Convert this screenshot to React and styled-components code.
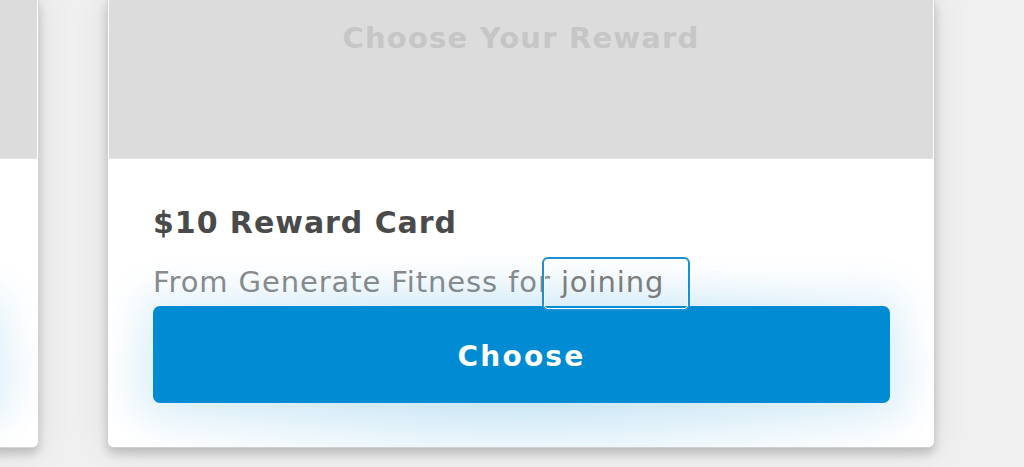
import React from 'react'
import styled, { createGlobalStyle } from 'styled-components'

const GlobalStyle = createGlobalStyle`
  html, body {
    margin: 0;
    padding: 0;
    background: #efefef;
    overflow: hidden;
  }
  body {
    font-family: 'DejaVu Sans', 'Open Sans', sans-serif;
  }
`

const Page = styled.div`
  width: 1024px;
  height: 467px;
  overflow: hidden;
  background: #f0f0f0;
`

const Row = styled.div`
  display: flex;
  align-items: flex-start;
  gap: 68px;
  margin-left: -789px;
  margin-top: -2px;
`

const Card = styled.article`
  box-sizing: border-box;
  flex: 0 0 828px;
  height: 450px;
  display: flex;
  flex-direction: column;
  background: #fff;
  border: 1px solid ${(p) => (p.$side ? '#d6d6d6' : '#d0d0d0')};
  border-radius: 0 0 7px 7px;
  overflow: hidden;
  box-shadow: 0 6px 10px rgba(0, 0, 0, 0.18), 0 0 36px rgba(0, 0, 0, 0.09);
`

const Picture = styled.div`
  height: 160px;
  flex: 0 0 160px;
  background: #dcdcdc;
  border-bottom: 1px solid #e6e6e6;
  margin: 0 1px;
  display: flex;
  justify-content: center;
  padding-top: 22px;
  box-sizing: border-box;
  color: #c6c6c6;
  font-weight: 700;
  font-size: 29px;
  letter-spacing: 1.2px;
`

const Body = styled.div`
  flex: 1;
  display: flex;
  flex-direction: column;
  padding: 44px 45px 0;
  background: radial-gradient(ellipse 70% 60% at 50% 78%, rgba(0, 139, 210, 0.14), rgba(0, 139, 210, 0) 75%), #fff;
`

const Title = styled.h2`
  margin: 0;
  font-size: 30px;
  font-weight: 700;
  color: #4a4a4a;
  letter-spacing: 0.95px;
  line-height: 40px;
`

const Sub = styled.p`
  margin: 19px 0 0;
  font-size: 29px;
  color: #8b8b8b;
  line-height: 40px;
  letter-spacing: 0.9px;
  white-space: nowrap;
`

const Mark = styled.span`
  position: relative;
  z-index: 1;
  display: inline-block;
  margin: -6px 0 -10px -19px;
  padding: 9px 24px 12px 17px;
  line-height: 29px;
  border: 2px solid #1c8fd3;
  border-radius: 6px;
  box-shadow: inset 0 0 0 1px #fff;
  color: #7c7c7c;
  vertical-align: baseline;
`

const Button = styled.button`
  margin-top: 4px;
  height: 97px;
  width: 737px;
  padding: 4px 0 0;
  border: none;
  border-radius: 7px;
  background: #008bd2;
  color: #fff;
  font-family: 'DejaVu Sans', 'Open Sans', sans-serif;
  font-size: 28px;
  font-weight: 700;
  letter-spacing: 2.2px;
  box-shadow: 0 0 40px 14px rgba(0, 139, 210, 0.12);
`

function RewardCard({ side }) {
  return (
    <Card $side={side}>
      <Picture>Choose Your Reward</Picture>
      <Body>
        <Title>$10 Reward Card</Title>
        <Sub>
          From Generate Fitness for <Mark>joining</Mark>
        </Sub>
        <Button>Choose</Button>
      </Body>
    </Card>
  )
}

export default function App() {
  return (
    <Page>
      <GlobalStyle />
      <Row>
        <RewardCard side />
        <RewardCard />
      </Row>
    </Page>
  )
}
